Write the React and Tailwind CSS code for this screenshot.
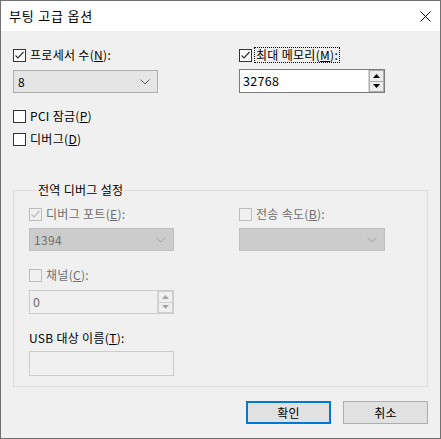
import React from 'react'

const font = "font-['Noto_Sans_CJK_KR',sans-serif]"

function Check({ checked, disabled }) {
    const stroke = disabled ? '#bcbcbc' : '#333333'
    return (
        <span className={`w-[13px] h-[13px] shrink-0 border flex items-center justify-center ${disabled ? 'border-[#bcbcbc] bg-[#f0f0f0]' : 'border-[#333333] bg-white'}`}>
            {checked && (
                <svg width="11" height="11" viewBox="0 0 11 11">
                    <path d="M1.5 5.5 L4 8 L9.5 2" fill="none" stroke={stroke} strokeWidth="1.2" />
                </svg>
            )}
        </span>
    )
}

function CheckRow({ checked, disabled, children, focused }) {
    return (
        <div className="h-[16px] flex items-center">
            <Check checked={checked} disabled={disabled} />
            <span className={`ml-[2px] px-[1px] leading-[14px] ${focused ? 'border border-dotted border-black' : 'border border-transparent'} ${disabled ? 'text-[#6d6d6d]' : 'text-black'}`}>
                {children}
            </span>
        </div>
    )
}

function Chevron({ color }) {
    return (
        <svg width="10" height="6" viewBox="0 0 10 6">
            <path d="M0.5 0.5 L5 5 L9.5 0.5" fill="none" stroke={color} strokeWidth="1" />
        </svg>
    )
}

function Select({ value, disabled }) {
    return (
        <div className={`h-[23px] flex items-center justify-between pl-[4px] pr-[7px] border ${disabled ? 'bg-[#cccccc] border-[#bfbfbf] text-[#6d6d6d]' : 'bg-[#e5e5e5] border-[#adadad] text-black'}`}>
            <span className="leading-[14px]">{value}</span>
            <Chevron color={disabled ? '#a5a5a5' : '#606060'} />
        </div>
    )
}

function Spinner({ disabled }) {
    const c = disabled ? '#a5a5a5' : '#000000'
    return (
        <div className="w-[16px] h-full flex flex-col border-l border-[#d4d4d4]">
            <div className={`flex-1 flex items-center justify-center border border-[#adadad] ${disabled ? 'bg-[#f0f0f0] border-[#cfcfcf]' : 'bg-[#ececec]'}`}>
                <svg width="7" height="4" viewBox="0 0 7 4"><path d="M3.5 0 L7 4 L0 4 Z" fill={c} /></svg>
            </div>
            <div className={`flex-1 flex items-center justify-center border border-t-0 border-[#adadad] ${disabled ? 'bg-[#f0f0f0] border-[#cfcfcf]' : 'bg-[#ececec]'}`}>
                <svg width="7" height="4" viewBox="0 0 7 4"><path d="M0 0 L7 0 L3.5 4 Z" fill={c} /></svg>
            </div>
        </div>
    )
}

function NumberInput({ value, disabled }) {
    return (
        <div className={`h-[24px] flex items-stretch border ${disabled ? 'border-[#cccccc] bg-[#f0f0f0] text-[#6d6d6d]' : 'border-[#7a7a7a] bg-white text-black'}`}>
            <span className="flex-1 flex items-center pl-[3px] leading-[14px] text-[12.5px]">{value}</span>
            <Spinner disabled={disabled} />
        </div>
    )
}

export default function App() {
    return (
        <div className={`w-[441px] h-[439px] border border-[#717171] bg-[#f0f0f0] flex flex-col text-[12px] tracking-[0.3px] ${font}`}>
            <div className="h-[30px] bg-white flex items-center justify-between pl-[8px] pr-[9px]">
                <span className="text-[13px] leading-[16px] tracking-[0.8px] text-black">부팅 고급 옵션</span>
                <svg width="11" height="11" viewBox="0 0 11 11">
                    <path d="M0.5 0.5 L10.5 10.5 M10.5 0.5 L0.5 10.5" stroke="#000" strokeWidth="1" />
                </svg>
            </div>

            <div className="flex-1 flex flex-col px-[12px] pt-[16px]">
                <div className="flex justify-between">
                    <div className="w-[145px] flex flex-col">
                        <CheckRow checked>프로세서 수(<u>N</u>):</CheckRow>
                        <div className="mt-[7px]">
                            <Select value="8" />
                        </div>
                    </div>
                    <div className="w-[146px] mr-[43px] flex flex-col">
                        <CheckRow checked focused>최대 메모리(<u>M</u>):</CheckRow>
                        <div className="mt-[6px]">
                            <NumberInput value="32768" />
                        </div>
                    </div>
                </div>

                <div className="mt-[15px]">
                    <CheckRow>PCI 잠금(<u>P</u>)</CheckRow>
                </div>
                <div className="mt-[7px]">
                    <CheckRow>디버그(<u>D</u>)</CheckRow>
                </div>

                <fieldset className="mt-[35px] border border-[#dcdcdc] pl-[15px] pr-[42px] pb-[10px]">
                    <legend className="ml-[8px] px-[1px] leading-[16px] text-black">전역 디버그 설정</legend>
                    <div className="flex justify-between pt-[8px]">
                        <div className="w-[145px] flex flex-col">
                            <CheckRow checked disabled>디버그 포트(<u>E</u>):</CheckRow>
                            <div className="mt-[6px]">
                                <Select value="1394" disabled />
                            </div>
                            <div className="mt-[16px]">
                                <CheckRow disabled>채널(<u>C</u>):</CheckRow>
                            </div>
                            <div className="mt-[7px]">
                                <NumberInput value="0" disabled />
                            </div>
                            <div className="mt-[16px] h-[16px] flex items-center leading-[14px] text-black">
                                USB 대상 이름(<u>T</u>):
                            </div>
                            <div className="mt-[5px] h-[25px] border border-[#cccccc] bg-[#f0f0f0]" />
                        </div>
                        <div className="w-[146px] flex flex-col">
                            <CheckRow disabled>전송 속도(<u>B</u>):</CheckRow>
                            <div className="mt-[6px]">
                                <Select value="" disabled />
                            </div>
                        </div>
                    </div>
                </fieldset>

                <div className="mt-[14px] flex justify-end gap-[12px]">
                    <button className="w-[85px] h-[23px] border-2 border-[#0078d7] bg-[#e1e1e1] text-black leading-[14px]">확인</button>
                    <button className="w-[85px] h-[23px] border border-[#adadad] bg-[#e1e1e1] text-black leading-[14px]">취소</button>
                </div>
            </div>
        </div>
    )
}
